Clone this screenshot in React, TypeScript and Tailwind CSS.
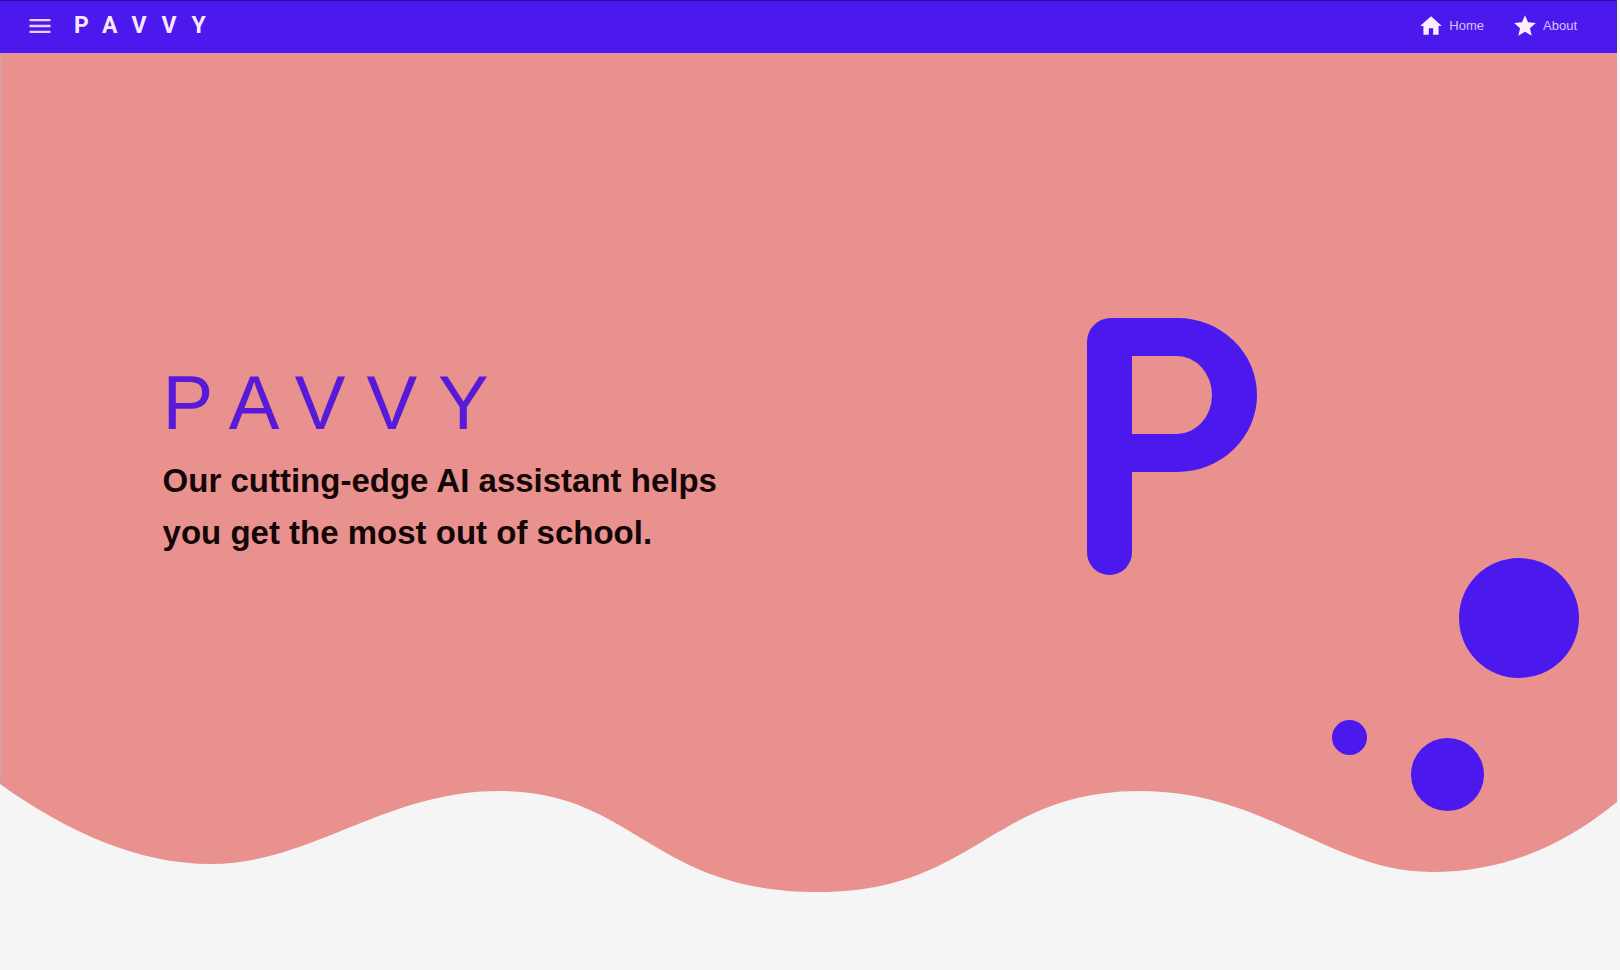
import type { ReactNode } from "react";
import { MdHome, MdMenu, MdStar } from "react-icons/md";

function NavLink({ href, icon, label }: { href: string; icon: ReactNode; label: string }) {
  return (
    <a href={href} className="flex items-center gap-[5px] font-['Liberation_Sans',Arial,sans-serif] text-[13px] leading-4 text-[#d9c4fb]">
      <span className="text-[26px] text-[#fbeeff]">{icon}</span>
      {label}
    </a>
  );
}

function Header() {
  return (
    <header className="flex h-[53px] items-center justify-between border-t border-[#2c1290] bg-[#4b18ee] pr-10 pb-[3px] pl-[26px] font-[Roboto,sans-serif]">
      <div className="flex items-center gap-5">
        <button type="button" aria-label="Menu" className="text-[28px] text-[#ecd0f8]">
          <MdMenu />
        </button>
        <a href="#home" className="text-[23px] leading-6 font-bold tracking-[15px] text-[#fbe6fc]">
          PAVVY
        </a>
      </div>
      <nav className="flex items-center gap-7">
        <NavLink href="#home" icon={<MdHome />} label="Home" />
        <NavLink href="#about" icon={<MdStar />} label="About" />
      </nav>
    </header>
  );
}

function Emblem() {
  return (
    <div role="img" aria-label="Pavvy emblem" className="w-[170px]">
      <div className="h-[154px] rounded-tl-[24px] border-x-[45px] border-y-[38px] border-[#4b18ee] [border-bottom-right-radius:80px_77px] [border-top-right-radius:80px_77px]" />
      <div className="h-[103px] w-[45px] rounded-b-full bg-[#4b18ee]" />
    </div>
  );
}

function Wave() {
  return (
    <svg viewBox="0 0 1616 110" preserveAspectRatio="none" className="block h-[110px] w-full bg-[#f5f5f5]" aria-hidden="true">
      <path
        fill="#e8918f"
        d="M0 0V2C70 52 140 82 211 82C310 82 385 9 499 9C635 9 650 110 818 110C975 110 990 9 1140 9C1265 9 1330 90 1431 90C1500 90 1560 66 1616 20V0Z"
      />
    </svg>
  );
}

export default function App() {
  return (
    <div className="min-h-screen bg-[#f5f5f5] pr-[3px] font-['Liberation_Sans',Arial,sans-serif]">
      <Header />
      <main className="relative">
        <section className="grid h-[729px] grid-cols-[2fr_1fr] border-l border-[#c9a3b4] bg-[#e8918f]">
          <div className="pt-[308px] pl-[15%]">
            <h1 className="text-[76px] leading-[84px] tracking-[21px] text-[#561ad8]">PAVVY</h1>
            <p className="mt-[10px] max-w-[600px] text-[33px] leading-[52px] font-bold text-[#140606]">
              Our cutting-edge AI assistant helps you get the most out of school.
            </p>
          </div>
          <div className="pt-[265px] pl-[9px]">
            <Emblem />
          </div>
        </section>
        <Wave />
        <span className="absolute top-[505px] right-[38px] size-[120px] rounded-full bg-[#4b18ee]" />
        <span className="absolute top-[667px] right-[250px] size-[35px] rounded-full bg-[#4b18ee]" />
        <span className="absolute top-[685px] right-[133px] size-[73px] rounded-full bg-[#4b18ee]" />
      </main>
    </div>
  );
}
